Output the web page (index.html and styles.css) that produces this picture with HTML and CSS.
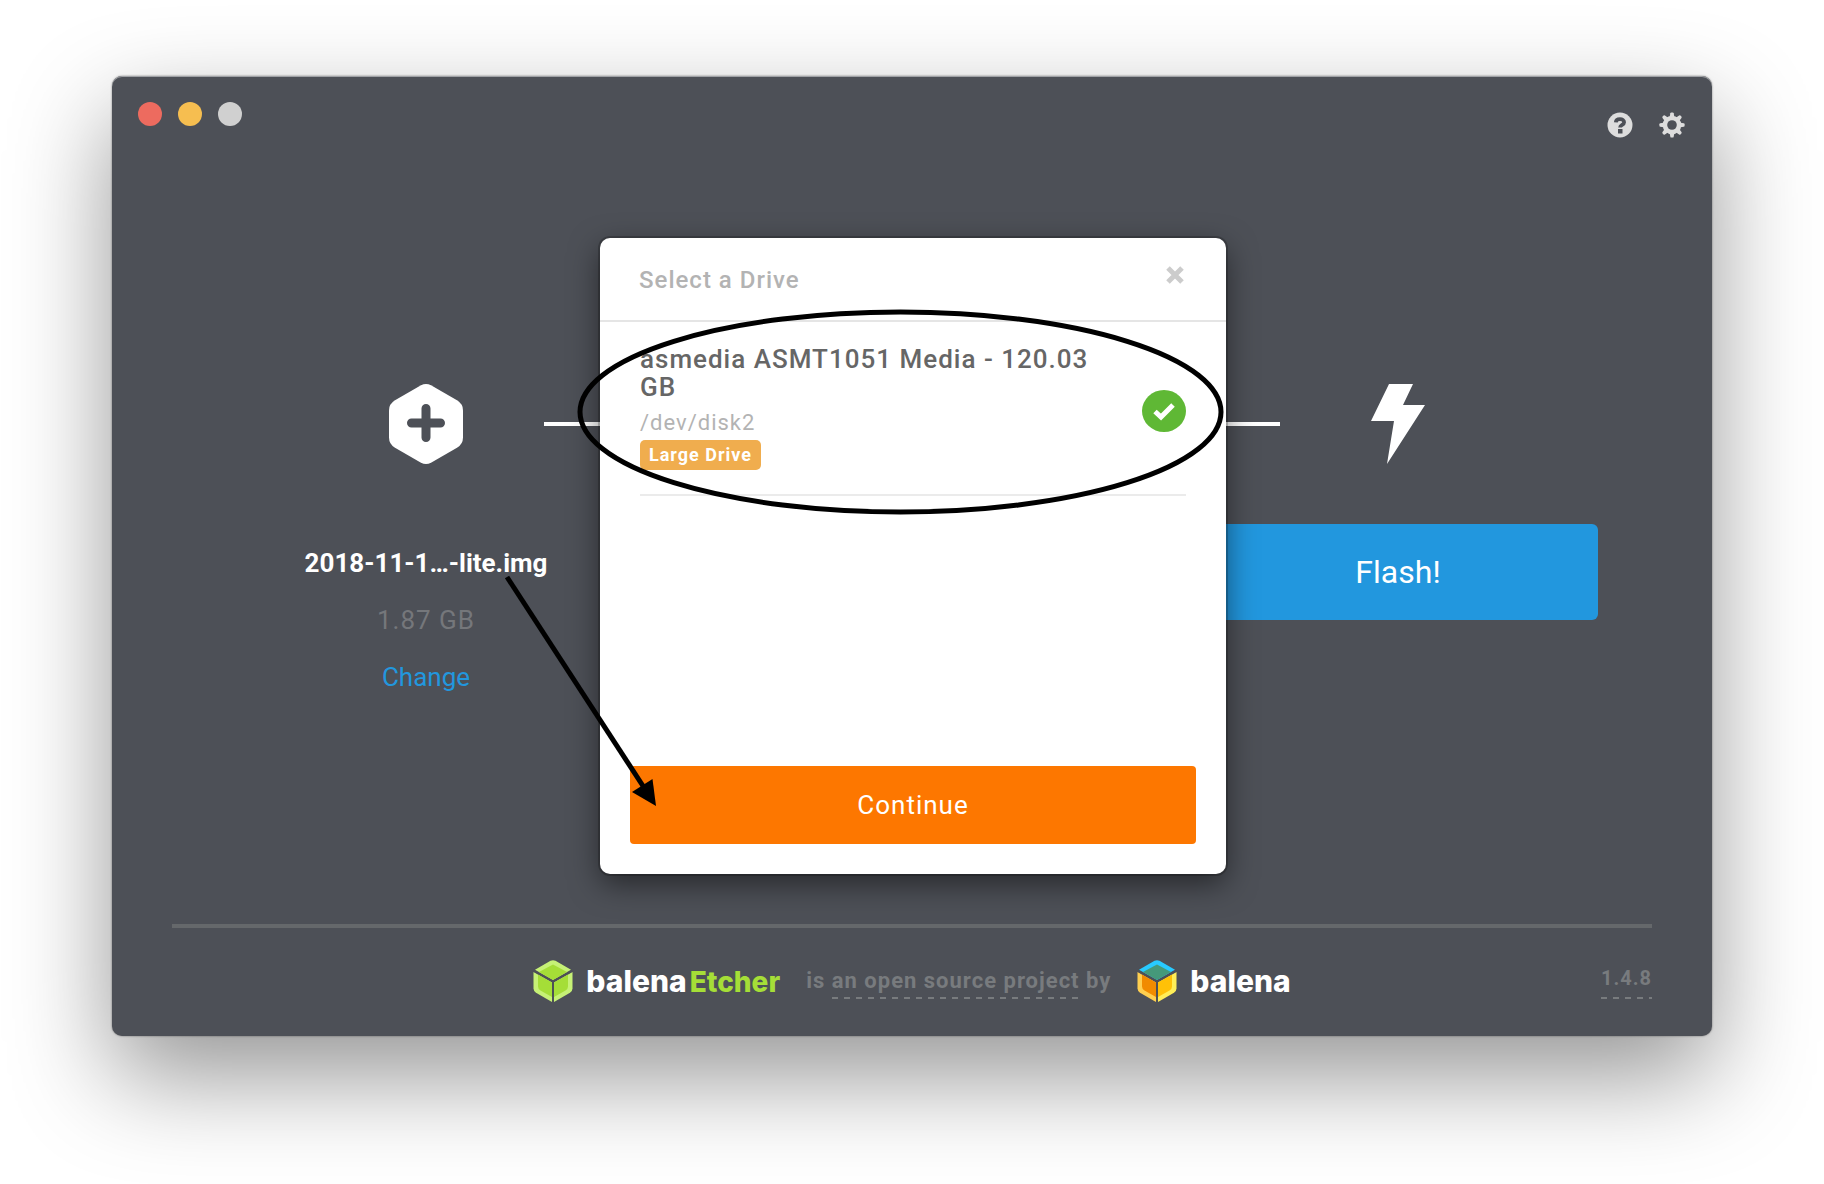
FILE: index.html
```html
<!DOCTYPE html>
<html lang="en">
<head>
    <meta charset="UTF-8">
    <meta name="viewport" content="width=device-width, initial-scale=1.0">
    <title>balenaEtcher</title>
    <link rel="stylesheet" href="styles.css">
</head>
<body>
    <div class="window">
        <header class="titlebar">
            <div class="lights">
                <button class="light close" aria-label="Close window"></button>
                <button class="light minimize" aria-label="Minimize window"></button>
                <button class="light zoom" aria-label="Zoom window" disabled></button>
            </div>
            <div class="tools">
                <button class="tool" aria-label="Help">
                    <svg width="26" height="26" viewBox="0 0 26 26">
                        <circle cx="13" cy="13" r="12.5" fill="#ddd"/>
                        <path d="M8.800 10.400C9 7.800 11 7.200 13 7.200c2.300 0 4.100 1.200 4.100 3.100 0 2.800-4 2.400-4 5.200" fill="none" stroke="#4d5057" stroke-width="3.800"/>
                        <rect x="11" y="17" width="4.500" height="4.500" fill="#4d5057"/>
                    </svg>
                </button>
                <button class="tool" aria-label="Settings">
                    <svg width="26" height="26" viewBox="0 0 26 26">
                        <g fill="#ddd">
                            <path id="tooth" d="M10.500 6 11.300 1.300Q11.500.400 12.300.400h1.400q.800 0 1 .900L15.500 6v14l-.800 4.700q-.200.900-1 .900h-1.400q-.800 0-1-.900L10.500 20z"/>
                            <use href="#tooth" transform="rotate(45 13 13)"/>
                            <use href="#tooth" transform="rotate(90 13 13)"/>
                            <use href="#tooth" transform="rotate(135 13 13)"/>
                            <circle cx="13" cy="13" r="9.300"/>
                        </g>
                        <circle cx="13" cy="13" r="4.800" fill="#4d5057"/>
                    </svg>
                </button>
            </div>
        </header>

        <main class="steps">
            <section class="step">
                <svg class="step-icon" width="74" height="80" viewBox="0 0 74 80">
                    <path d="M32 1.300q5-2.600 10 0l26 15q6 3.700 6 10v27.400q0 6.300-6 10l-26 15q-5 2.600-10 0l-26-15q-6-3.700-6-10V26.300q0-6.300 6-10z" fill="#fff"/>
                    <path d="M37 24.500v29M22.500 39h29" stroke="#4d5057" stroke-width="9" stroke-linecap="round"/>
                </svg>
                <div class="image-info">
                    <strong class="image-name">2018-11-1…-lite.img</strong>
                    <span class="image-size">1.87 GB</span>
                    <a class="change" href="#">Change</a>
                </div>
            </section>
            <div class="connector"></div>
            <section class="step">
                <svg class="step-icon" width="54" height="80" viewBox="0 0 54 80">
                    <path d="M18 0h24L32 21h22L16 80l7-43H0z" fill="#fff"/>
                </svg>
                <button class="flash">Flash!</button>
            </section>
        </main>

        <footer class="footer">
            <div class="credits">
                <a class="brand" href="#">
                    <svg width="40" height="42" viewBox="0 0 40 42">
                        <path d="M17.500.800q2.500-1.200 5 0L38 9.700 20 20 2 9.700z" fill="#c6f176"/>
                        <path d="M20 4.500 34 12 20 20 6 12z" fill="#a5de37"/>
                        <path d="M.500 12 19 22.500V42L3 32.700Q.500 31 .500 28.500z" fill="#c6f176"/>
                        <path d="M5 14.600 19 22.500V37L7.500 30.400Q5 29 5 26.500z" fill="#a5de37"/>
                        <path d="M39.500 12 21 22.500V42l16-9.300q2.500-1.700 2.500-4.200z" fill="#c6f176"/>
                        <path d="M35 14.600 21 22.500V37l11.500-6.600Q35 29 35 26.500z" fill="#a5de37"/>
                        <path d="M1 11 20 21.500 39 11M20 21.500V42" fill="none" stroke="#4d5057" stroke-width="1.500"/>
                    </svg>
                    <span class="brand-name">balena<span class="green">Etcher</span></span>
                </a>
                <p class="tagline">is <a class="dashed" href="#">an open source project</a> by</p>
                <a class="brand" href="#">
                    <svg width="40" height="42" viewBox="0 0 40 42">
                        <path d="M17.500.800q2.500-1.200 5 0L38 9.700 20 20 2 9.700z" fill="#28caff"/>
                        <path d="M20 4.500 34 12 20 20 6 12z" fill="#45997a"/>
                        <path d="M.500 12 19 22.500V42L3 32.700Q.500 31 .500 28.500z" fill="#ffcf50"/>
                        <path d="M5 14.600 19 22.500V37L7.500 30.400Q5 29 5 26.500z" fill="#f18b00"/>
                        <path d="M39.500 12 21 22.500V42l16-9.300q2.500-1.700 2.500-4.200z" fill="#ffee58"/>
                        <path d="M35 14.600 21 22.500V37l11.500-6.600Q35 29 35 26.500z" fill="#ffc107"/>
                        <path d="M1 11 20 21.500 39 11M20 21.500V42" fill="none" stroke="#4d5057" stroke-width="1.500"/>
                    </svg>
                    <span class="brand-name">balena</span>
                </a>
            </div>
            <a class="version dashed" href="#">1.4.8</a>
        </footer>

        <div class="overlay">
            <div class="modal" role="dialog" aria-labelledby="modal-title">
                <div class="modal-header">
                    <h1 class="modal-title" id="modal-title">Select a Drive</h1>
                    <button class="modal-close" aria-label="Close">
                        <svg width="18" height="20" viewBox="0 0 18 20">
                            <path d="M2 3l14 14M16 3 2 17" stroke="#ccc" stroke-width="5"/>
                        </svg>
                    </button>
                </div>
                <ul class="drives">
                    <li class="drive">
                        <div class="drive-info">
                            <h2 class="drive-name">asmedia ASMT1051 Media - 120.03 GB</h2>
                            <p class="drive-path">/dev/disk2</p>
                            <span class="badge">Large Drive</span>
                        </div>
                        <span class="drive-check">
                            <svg width="22" height="20" viewBox="0 0 22 20">
                                <path d="M2 10.500l6 5.500L20 4" fill="none" stroke="#fff" stroke-width="5"/>
                            </svg>
                        </span>
                    </li>
                </ul>
                <div class="modal-footer">
                    <button class="continue">Continue</button>
                </div>
            </div>
        </div>

        <!-- ellipse round the drive, arrow to the continue button -->
        <svg class="marks" width="660" height="520" viewBox="570 300 660 520">
            <ellipse cx="900.500" cy="412" rx="320.500" ry="100" fill="none" stroke="#000" stroke-width="5"/>
            <path d="M507 577 643 786" stroke="#000" stroke-width="5"/>
            <path d="M632 792 652.500 779 656 806z"/>
        </svg>
    </div>
</body>
</html>
```
FILE: styles.css
```css
body {
    margin: 0;
    padding: 76px 112px 148px;
    background-color: #fff;
    font-family: Roboto, sans-serif;
    font-size: 26px;
    line-height: 30px;
    letter-spacing: 1px;
}

h1, h2, p, ul {
    margin: 0;
    padding: 0;
}

button {
    border: none;
    padding: 0;
    background: none;
    font: inherit;
    letter-spacing: inherit;
    cursor: pointer;
}

a {
    color: inherit;
    text-decoration: none;
}

svg {
    display: block;
}

.window {
    position: relative;
    background-color: #4d5057;
    border-radius: 10px;
    box-shadow: inset 0 1px 0 #a0a2a6, 0 0 2px rgba(0, 0, 0, 0.5), 0 40px 100px rgba(0, 0, 0, 0.42);
}

.titlebar {
    display: flex;
    justify-content: space-between;
    align-items: flex-start;
    padding: 26px 27px 0 26px;
}

.lights {
    display: flex;
    gap: 16px;
}

.light {
    width: 24px;
    height: 24px;
    border-radius: 50%;
}

.close {
    background-color: #ed6b5f;
}

.minimize {
    background-color: #f6be50;
}

.zoom {
    background-color: #d0d0d0;
}

.tools {
    display: flex;
    gap: 26px;
    padding-top: 10px;
}

.steps {
    display: grid;
    grid-template-columns: minmax(0, 400px) 1fr minmax(0, 400px);
    padding: 246px 114px 232px;
}

.step {
    display: flex;
    flex-direction: column;
    align-items: center;
    gap: 60px;
}

.connector {
    height: 4px;
    margin: 38px -82px 0;
    background-color: #fff;
}

.image-info {
    display: flex;
    flex-direction: column;
    align-items: center;
    gap: 27px;
    padding-top: 24px;
}

.image-name {
    color: #fff;
    font-weight: bold;
    letter-spacing: 0;
}

.image-size {
    color: #75777b;
}

.change {
    color: #2297de;
    letter-spacing: 0;
}

.flash {
    width: 100%;
    height: 96px;
    border-radius: 6px;
    background-color: #2297de;
    color: #fff;
    font-size: 32px;
    letter-spacing: 0;
}

.footer {
    display: grid;
    grid-template-columns: 1fr auto 1fr;
    align-items: center;
    margin: 0 60px;
    padding: 32px 0 34px;
    border-top: 4px solid #65686b;
    color: #787b7e;
    font-size: 22px;
    font-weight: bold;
}

.credits {
    grid-column: 2;
    display: flex;
    align-items: center;
    gap: 26px;
}

.brand {
    display: flex;
    align-items: center;
    gap: 13px;
}

.brand-name {
    color: #fff;
    font-family: Inter, sans-serif;
    font-size: 30px;
    font-weight: 800;
    letter-spacing: 0;
}

.green {
    margin-left: 3px;
    color: #a5de37;
    font-size: 28px;
}

.dashed {
    padding-bottom: 6px;
    background: repeating-linear-gradient(to right, #787b7e 0 6px, transparent 6px 12px) left bottom / 100% 2px no-repeat;
}

.version {
    justify-self: end;
    font-size: 20px;
}

.overlay {
    position: absolute;
    inset: 0;
    display: flex;
    justify-content: center;
    align-items: flex-start;
    padding: 162px 0 0 2px;
}

.modal {
    width: 626px;
    border-radius: 10px;
    background-color: #fff;
    box-shadow: 0 0 0 2px rgba(0, 0, 0, 0.2), 0 10px 30px rgba(0, 0, 0, 0.5);
}

.modal-header {
    display: flex;
    justify-content: space-between;
    align-items: flex-start;
    padding: 27px 42px 25px 39px;
    border-bottom: 2px solid #e5e5e5;
}

.modal-title {
    color: #b3b3b3;
    font-size: 24px;
    font-weight: 500;
}

.drives {
    min-height: 444px;
    padding: 0 40px;
    list-style-type: none;
    box-sizing: border-box;
}

.drive {
    display: flex;
    justify-content: space-between;
    align-items: center;
    gap: 40px;
    padding: 23px 0 24px;
    border-bottom: 2px solid #ebebeb;
}

.drive-name {
    color: #666;
    font-size: 26px;
    font-weight: 500;
    line-height: 28px;
}

.drive-path {
    padding-top: 5px;
    color: #b3b3b3;
    font-size: 22px;
    line-height: 34px;
}

.badge {
    display: block;
    width: fit-content;
    padding: 0 9px;
    border-radius: 5px;
    background-color: #f0ad4e;
    color: #fff;
    font-size: 18px;
    font-weight: bold;
}

.drive-check {
    display: flex;
    flex: none;
    justify-content: center;
    align-items: center;
    width: 44px;
    height: 42px;
    margin-top: 6px;
    border-radius: 50%;
    background-color: #5fb835;
}

.modal-footer {
    padding: 0 30px 30px;
}

.continue {
    width: 100%;
    height: 78px;
    border-radius: 4px;
    background-color: #fd7700;
    color: #fff;
}

.marks {
    position: absolute;
    top: 224px;
    left: 50%;
    margin-left: -342px;
    overflow: visible;
}
```
